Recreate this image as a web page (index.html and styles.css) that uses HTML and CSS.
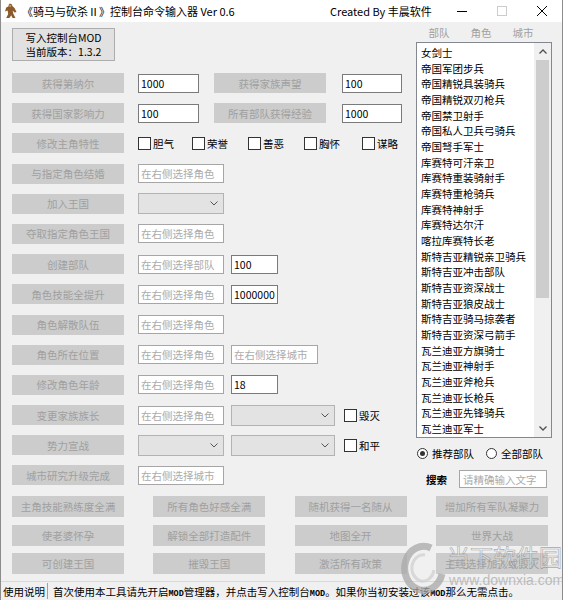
FILE: index.html
```html
<!DOCTYPE html>
<html lang="zh-CN">
<head>
<meta charset="utf-8">
<title>控制台命令输入器</title>
<link rel="stylesheet" href="styles.css">
</head>
<body>
<div class="window">
  <div class="titlebar">
    <svg class="app-icon" viewBox="0 0 13 16" width="13" height="16"><path d="M5 1 C7 0 8.5 1.2 8.3 3 L10.5 5 L12.5 9 L10.5 9.5 L8.6 7.4 L9.4 11 L11.5 15 L8.6 15 L7.2 12.2 L5.4 15 L2.2 15 L4.2 11 L3.6 7.6 L1 8.6 L2.2 4.6 L4.4 3.4 Z" fill="#8b5a2b"/><path d="M5.6 1.6 L7.4 2.4 L6.8 4.2 L5.2 3.6 Z" fill="#c79a5a"/></svg>
    <span class="title">《骑马与砍杀Ⅱ》控制台命令输入器 Ver 0.6</span>
    <span class="author">Created By 丰晨软件</span>
    <div class="controls">
      <span class="ctl"><svg width="10" height="1" viewBox="0 0 10 1"><rect width="10" height="1" fill="#000"/></svg></span>
      <span class="ctl"><svg width="10" height="10" viewBox="0 0 10 10"><rect x="0.5" y="0.5" width="9" height="9" fill="none" stroke="#cccccc"/></svg></span>
      <span class="ctl"><svg width="10" height="10" viewBox="0 0 10 10"><path d="M0 0L10 10M10 0L0 10" stroke="#000" stroke-width="1"/></svg></span>
    </div>
  </div>

  <div class="main">
    <div class="left">
      <div class="btn-primary">写入控制台MOD<br>当前版本：1.3.2</div>
      <div class="rows">
        <div class="row">
          <div class="btn">获得第纳尔</div>
          <div class="tb tb-a w61">1000</div>
          <div class="btn btn-2">获得家族声望</div>
          <div class="tb tb-d w60">100</div>
        </div>
        <div class="row">
          <div class="btn">获得国家影响力</div>
          <div class="tb tb-a w61">100</div>
          <div class="btn btn-2">所有部队获得经验</div>
          <div class="tb tb-d w60">1000</div>
        </div>
        <div class="row">
          <div class="btn">修改主角特性</div>
          <label class="chk chk-first c54"><span class="box"></span>胆气</label>
          <label class="chk c56"><span class="box"></span>荣誉</label>
          <label class="chk c56"><span class="box"></span>善恶</label>
          <label class="chk c58"><span class="box"></span>胸怀</label>
          <label class="chk"><span class="box"></span>谋略</label>
        </div>
        <div class="row">
          <div class="btn">与指定角色结婚</div>
          <div class="tb tb-a ph w86">在右侧选择角色</div>
        </div>
        <div class="row">
          <div class="btn">加入王国</div>
          <div class="sel tb-a w86"><svg width="8" height="5" viewBox="0 0 8 5"><path d="M0.5 0.5L4 4L7.5 0.5" fill="none" stroke="#555" stroke-width="1"/></svg></div>
        </div>
        <div class="row">
          <div class="btn">夺取指定角色王国</div>
          <div class="tb tb-a ph w86">在右侧选择角色</div>
        </div>
        <div class="row">
          <div class="btn">创建部队</div>
          <div class="tb tb-a ph w86">在右侧选择部队</div>
          <div class="tb tb-b w47">100</div>
        </div>
        <div class="row">
          <div class="btn">角色技能全提升</div>
          <div class="tb tb-a ph w86">在右侧选择角色</div>
          <div class="tb tb-b w47">1000000</div>
        </div>
        <div class="row">
          <div class="btn">角色解散队伍</div>
          <div class="tb tb-a ph w86">在右侧选择角色</div>
        </div>
        <div class="row">
          <div class="btn">角色所在位置</div>
          <div class="tb tb-a ph w86">在右侧选择角色</div>
          <div class="tb tb-b ph w87">在右侧选择城市</div>
        </div>
        <div class="row">
          <div class="btn">修改角色年龄</div>
          <div class="tb tb-a ph w86">在右侧选择角色</div>
          <div class="tb tb-b w47">18</div>
        </div>
        <div class="row">
          <div class="btn">变更家族族长</div>
          <div class="tb tb-a ph w86">在右侧选择角色</div>
          <div class="sel tb-b w104"><svg width="8" height="5" viewBox="0 0 8 5"><path d="M0.5 0.5L4 4L7.5 0.5" fill="none" stroke="#555" stroke-width="1"/></svg></div>
          <label class="chk chk-side"><span class="box"></span>毁灭</label>
        </div>
        <div class="row">
          <div class="btn">势力宣战</div>
          <div class="sel tb-a w86"><svg width="8" height="5" viewBox="0 0 8 5"><path d="M0.5 0.5L4 4L7.5 0.5" fill="none" stroke="#555" stroke-width="1"/></svg></div>
          <div class="sel tb-b w104"><svg width="8" height="5" viewBox="0 0 8 5"><path d="M0.5 0.5L4 4L7.5 0.5" fill="none" stroke="#555" stroke-width="1"/></svg></div>
          <label class="chk chk-side"><span class="box"></span>和平</label>
        </div>
        <div class="row">
          <div class="btn">城市研究升级完成</div>
          <div class="tb tb-a ph w86">在右侧选择城市</div>
        </div>
      </div>
    </div>

    <div class="right">
      <div class="tabs"><span>部队</span><span>角色</span><span>城市</span></div>
      <div class="listbox">
        <ul class="items">
          <li>女剑士</li>
          <li>帝国军团步兵</li>
          <li>帝国精锐具装骑兵</li>
          <li>帝国精锐双刃枪兵</li>
          <li>帝国禁卫射手</li>
          <li>帝国私人卫兵弓骑兵</li>
          <li>帝国弩手军士</li>
          <li>库赛特可汗亲卫</li>
          <li>库赛特重装骑射手</li>
          <li>库赛特重枪骑兵</li>
          <li>库赛特神射手</li>
          <li>库赛特达尔汗</li>
          <li>喀拉库赛特长老</li>
          <li>斯特吉亚精锐亲卫骑兵</li>
          <li>斯特吉亚冲击部队</li>
          <li>斯特吉亚资深战士</li>
          <li>斯特吉亚狼皮战士</li>
          <li>斯特吉亚骑马掠袭者</li>
          <li>斯特吉亚资深弓箭手</li>
          <li>瓦兰迪亚方旗骑士</li>
          <li>瓦兰迪亚神射手</li>
          <li>瓦兰迪亚斧枪兵</li>
          <li>瓦兰迪亚长枪兵</li>
          <li>瓦兰迪亚先锋骑兵</li>
          <li>瓦兰迪亚军士</li>
        </ul>
        <div class="vscroll">
          <div class="arrow"><svg width="8" height="5" viewBox="0 0 8 5"><path d="M0.5 4.5L4 1L7.5 4.5" fill="none" stroke="#505050" stroke-width="1.3"/></svg></div>
          <div class="track"><div class="thumb"></div></div>
          <div class="arrow"><svg width="8" height="5" viewBox="0 0 8 5"><path d="M0.5 0.5L4 4L7.5 0.5" fill="none" stroke="#505050" stroke-width="1.3"/></svg></div>
        </div>
      </div>
      <div class="radios">
        <label class="radio radio-first"><span class="circle on"></span>推荐部队</label>
        <label class="radio"><span class="circle"></span>全部部队</label>
      </div>
      <div class="search">
        <span class="search-label">搜索</span>
        <div class="tb ph search-box">请精确输入文字</div>
      </div>
    </div>
  </div>

  <div class="grid-btns">
    <div class="btn">主角技能熟练度全满</div>
    <div class="btn">所有角色好感全满</div>
    <div class="btn">随机获得一名随从</div>
    <div class="btn">增加所有军队凝聚力</div>
    <div class="btn">使老婆怀孕</div>
    <div class="btn">解锁全部打造配件</div>
    <div class="btn">地图全开</div>
    <div class="btn">世界大战</div>
    <div class="btn">可创建王国</div>
    <div class="btn">摧毁王国</div>
    <div class="btn">激活所有政策</div>
    <div class="btn">主线选择加入或毁灭</div>
  </div>

  <div class="statusbar">
    <span class="status-label">使用说明</span>
    <span class="status-sep"></span>
    <span class="status-text">首次使用本工具请先开启<span class="mod">MOD</span>管理器，并点击写入控制台<span class="mod">MOD</span>。如果你当初安装过该<span class="mod">MOD</span>那么无需点击。</span>
  </div>

  <div class="watermark">
    <svg class="wm-logo" width="46" height="54" viewBox="0 0 46 54"><path d="M30 7 A19 22 0 1 0 41 33" fill="none" stroke="#a8a8a8" stroke-width="7"/><path d="M24 14 A11 13 0 1 0 33 29" fill="none" stroke="#d0d0d0" stroke-width="3"/></svg>
    <div class="wm-text">
      <span class="wm-cn">当下软件园</span>
      <span class="wm-url">www.downxia.com</span>
    </div>
  </div>
</div>
</body>
</html>
```

FILE: styles.css
```css
* { box-sizing: border-box; margin: 0; padding: 0; }
html, body { margin: 0; background: #f0f0f0; }
body {
  font-family: "Noto Sans CJK SC", "Noto Sans", sans-serif;
  font-size: 10.5px;
  color: #000;
}
ul { list-style: none; }

.window {
  position: relative;
  width: 563px;
  height: 600px;
  background: #f0f0f0;
  border-left: 1px solid #8c8c8c;
  border-right: 1px solid #8c8c8c;
  display: flex;
  flex-direction: column;
  overflow: hidden;
}

/* title bar */
.titlebar {
  height: 22px;
  flex: 0 0 22px;
  background: #fff;
  display: flex;
  align-items: center;
}
.app-icon { margin-left: 3px; flex: 0 0 13px; }
.title { margin-left: 5px; width: 308px; font-size: 11px; white-space: nowrap; }
.author { flex: 1; font-size: 11px; white-space: nowrap; }
.controls { display: flex; width: 120px; height: 22px; }
.ctl { width: 40px; display: flex; align-items: center; justify-content: center; }

/* main area */
.main { display: flex; height: 474px; flex: 0 0 474px; }
.left { width: 415px; padding: 6px 0 0 11px; }
.btn-primary {
  width: 103px;
  height: 33px;
  background: #e1e1e1;
  border: 1px solid #adadad;
  text-align: center;
  line-height: 14px;
  padding-top: 2px;
  font-size: 10.5px;
}
.rows { margin-top: 12px; display: flex; flex-direction: column; gap: 10.2px; }
.row { height: 20px; display: flex; align-items: center; }

.btn {
  width: 112px;
  height: 20px;
  background: #cccccc;
  color: #a0a0a0;
  display: flex;
  align-items: center;
  justify-content: center;
  white-space: nowrap;
  flex: 0 0 auto;
}
.btn-2 { margin-left: 15px; }

.tb {
  height: 19px;
  background: #fff;
  border: 1px solid #7a7a7a;
  padding-left: 2px;
  display: flex;
  align-items: center;
  white-space: nowrap;
  overflow: hidden;
  flex: 0 0 auto;
}
.tb.ph { border-color: #a6a6a6; color: #ababab; }
.tb-a { margin-left: 14px; }
.tb-b { margin-left: 7px; }
.tb-d { margin-left: 16px; }
.w47 { width: 47px; }
.w60 { width: 60px; }
.w61 { width: 61px; }
.w86 { width: 86px; }
.w87 { width: 87px; }
.w104 { width: 104px; }

.sel {
  height: 21px;
  background: #e3e3e3;
  border: 1px solid #b3b3b3;
  display: flex;
  align-items: center;
  justify-content: flex-end;
  padding-right: 5px;
  flex: 0 0 auto;
}

.chk { display: flex; align-items: center; white-space: nowrap; flex: 0 0 auto; }
.chk .box {
  width: 13px;
  height: 13px;
  border: 1px solid #333;
  background: #fff;
  margin-right: 2px;
}
.chk-first { margin-left: 14px; }
.c54 { width: 54px; }
.c56 { width: 56px; }
.c58 { width: 58px; }
.chk-side { margin-left: 9px; }

/* right panel */
.right { width: 136px; display: flex; flex-direction: column; }
.tabs { height: 20px; display: flex; padding-left: 2px; align-items: center; }
.tabs span { width: 42px; text-align: center; color: #a0a0a0; }
.listbox {
  height: 396px;
  border: 1px solid #828790;
  background: #fff;
  display: flex;
}
.items { flex: 1; padding: 2px 0 0 4px; line-height: 15.67px; white-space: nowrap; overflow: hidden; }
.vscroll { width: 17px; background: #f0f0f0; display: flex; flex-direction: column; }
.arrow { height: 17px; display: flex; align-items: center; justify-content: center; }
.track { flex: 1; }
.thumb { height: 238px; margin: 0 2px; background: #cdcdcd; }

.radios { height: 30px; display: flex; align-items: center; padding-left: 1px; }
.radio { display: flex; align-items: center; white-space: nowrap; }
.radio-first { margin-right: 12px; }
.circle {
  width: 11px;
  height: 11px;
  border: 1px solid #333;
  border-radius: 50%;
  background: #fff;
  margin-right: 4px;
  display: flex;
  align-items: center;
  justify-content: center;
}
.circle.on::after {
  content: "";
  width: 5px;
  height: 5px;
  border-radius: 50%;
  background: #333;
}

.search { display: flex; align-items: center; height: 22px; padding-left: 10px; }
.search-label { font-weight: bold; width: 33px; }
.search-box { width: 88px; height: 18px; border-color: #c8c8c8; padding-left: 3px; }

/* bottom grid */
.grid-btns {
  display: grid;
  grid-template-columns: repeat(4, 112px);
  grid-auto-rows: 21px;
  column-gap: 29.3px;
  row-gap: 7.5px;
  padding-left: 11px;
}
.grid-btns .btn { height: 21px; }

/* status bar */
.statusbar {
  margin-top: auto;
  height: 19px;
  border-top: 1px solid #d9d9d9;
  display: flex;
  align-items: center;
  white-space: nowrap;
}
.status-label { padding-left: 2px; }
.status-sep { width: 1px; height: 16px; background: #a0a0a0; margin-left: 2px; }
.status-text { margin-left: 5px; }
.mod { font-family: "Liberation Mono", monospace; font-size: 8.5px; font-weight: bold; }

/* watermark overlay */
.watermark {
  position: absolute;
  left: 400px;
  top: 541px;
  display: flex;
  align-items: flex-start;
  pointer-events: none;
}
.wm-logo { opacity: 0.75; }
.wm-text { display: flex; flex-direction: column; opacity: 0.7; }
.wm-cn {
  font-size: 23px;
  line-height: 30px;
  -webkit-text-stroke: 0.6px #8a8a8a;
  color: rgba(255,255,255,0.6);
}
.wm-url {
  font-family: "Liberation Sans", sans-serif;
  font-size: 14px;
  line-height: 18px;
  color: #a8a8a8;
  padding-left: 2px;
}
```
